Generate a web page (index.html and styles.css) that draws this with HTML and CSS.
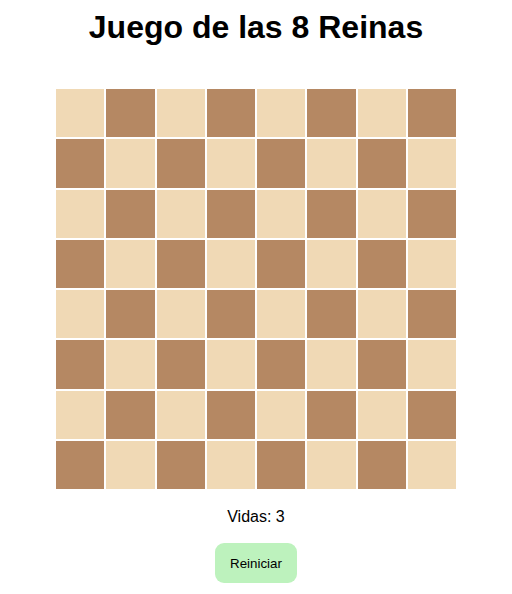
FILE: index.html
```html
<!DOCTYPE html>
<html lang="es">
<head>
<meta charset="utf-8">
<title>Juego de las 8 Reinas</title>
<link rel="stylesheet" href="styles.css">
</head>
<body>
<main class="game">
  <h1 class="title">Juego de las 8 Reinas</h1>
  <div class="board">
    <div class="cell light"></div><div class="cell dark"></div><div class="cell light"></div><div class="cell dark"></div><div class="cell light"></div><div class="cell dark"></div><div class="cell light"></div><div class="cell dark"></div>
    <div class="cell dark"></div><div class="cell light"></div><div class="cell dark"></div><div class="cell light"></div><div class="cell dark"></div><div class="cell light"></div><div class="cell dark"></div><div class="cell light"></div>
    <div class="cell light"></div><div class="cell dark"></div><div class="cell light"></div><div class="cell dark"></div><div class="cell light"></div><div class="cell dark"></div><div class="cell light"></div><div class="cell dark"></div>
    <div class="cell dark"></div><div class="cell light"></div><div class="cell dark"></div><div class="cell light"></div><div class="cell dark"></div><div class="cell light"></div><div class="cell dark"></div><div class="cell light"></div>
    <div class="cell light"></div><div class="cell dark"></div><div class="cell light"></div><div class="cell dark"></div><div class="cell light"></div><div class="cell dark"></div><div class="cell light"></div><div class="cell dark"></div>
    <div class="cell dark"></div><div class="cell light"></div><div class="cell dark"></div><div class="cell light"></div><div class="cell dark"></div><div class="cell light"></div><div class="cell dark"></div><div class="cell light"></div>
    <div class="cell light"></div><div class="cell dark"></div><div class="cell light"></div><div class="cell dark"></div><div class="cell light"></div><div class="cell dark"></div><div class="cell light"></div><div class="cell dark"></div>
    <div class="cell dark"></div><div class="cell light"></div><div class="cell dark"></div><div class="cell light"></div><div class="cell dark"></div><div class="cell light"></div><div class="cell dark"></div><div class="cell light"></div>
  </div>
  <p class="lives">Vidas: 3</p>
  <button class="reset" type="button">Reiniciar</button>
</main>
</body>
</html>
```
FILE: styles.css
```css
html, body {
  margin: 0;
  padding: 0;
  background: #ffffff;
}

body {
  font-family: "Liberation Sans", Arial, sans-serif;
  color: #000000;
}

.game {
  display: flex;
  flex-direction: column;
  align-items: center;
}

.title {
  margin: 9px 0 0;
  font-size: 32px;
  line-height: 37px;
  font-weight: bold;
}

.board {
  margin-top: 43px;
  width: 400px;
  height: 400px;
  display: grid;
  grid-template-columns: repeat(8, 1fr);
  grid-template-rows: repeat(8, 1fr);
  gap: 2px;
  background: #ffffff;
}

.cell.light {
  background: #f0d9b5;
}

.cell.dark {
  background: #b58863;
}

.lives {
  margin: 19px 0 0;
  font-size: 16px;
  line-height: 18px;
}

.reset {
  margin-top: 17px;
  height: 40px;
  padding: 0 15px;
  border: none;
  border-radius: 9px;
  background: #bdf2bd;
  font-family: "Liberation Sans", Arial, sans-serif;
  font-size: 13.333px;
  color: #000000;
  cursor: pointer;
}
```
